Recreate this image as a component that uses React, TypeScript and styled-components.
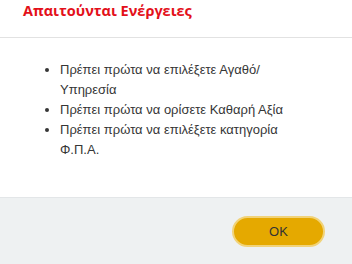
import React from 'react';
import styled, { createGlobalStyle } from 'styled-components';

const GlobalStyle = createGlobalStyle`
  html, body {
    margin: 0;
    padding: 0;
    background: #ffffff;
  }
  #root {
    width: 352px;
    height: 264px;
  }
`;

const Dialog = styled.div`
  width: 352px;
  height: 264px;
  display: flex;
  flex-direction: column;
  background: #ffffff;
  overflow: hidden;
`;

const Header = styled.div`
  height: 37px;
  padding: 0 23px;
  display: flex;
  align-items: flex-start;
  border-bottom: 1px solid #e2e2e2;
  box-sizing: content-box;
`;

const Title = styled.h2`
  margin: 0;
  padding-top: 1px;
  font-family: 'Open Sans', 'Noto Sans', sans-serif;
  font-size: 14.5px;
  font-weight: 700;
  line-height: 20px;
  color: #e3101a;
`;

const Body = styled.div`
  flex: 1;
  padding: 22px 24px 0 24px;
`;

const List = styled.ul`
  margin: 0;
  padding-left: 36px;
  font-family: 'Liberation Sans', Arial, sans-serif;
  font-size: 13px;
  line-height: 20px;
  color: #363636;
`;

const Item = styled.li`
  padding-right: 40px;
`;

const Footer = styled.div`
  height: 66px;
  background: #eef1f2;
  border-top: 1px solid #e3e6e8;
  display: flex;
  align-items: center;
  justify-content: flex-end;
  padding-right: 27px;
`;

const OkButton = styled.button`
  width: 93px;
  height: 31px;
  border-radius: 16px;
  border: 2px solid #f1d379;
  background: #e5a900;
  color: #333333;
  font-family: 'Liberation Sans', Arial, sans-serif;
  font-size: 13px;
  cursor: pointer;
  margin-top: 1px;
`;

const messages = [
  'Πρέπει πρώτα να επιλέξετε Αγαθό/ Υπηρεσία',
  'Πρέπει πρώτα να ορίσετε Καθαρή Αξία',
  'Πρέπει πρώτα να επιλέξετε κατηγορία Φ.Π.Α.',
];

export default function App() {
  return (
    <>
      <GlobalStyle />
      <Dialog>
        <Header>
          <Title>Απαιτούνται Ενέργειες</Title>
        </Header>
        <Body>
          <List>
            {messages.map((m) => (
              <Item key={m}>{m}</Item>
            ))}
          </List>
        </Body>
        <Footer>
          <OkButton>OK</OkButton>
        </Footer>
      </Dialog>
    </>
  );
}
